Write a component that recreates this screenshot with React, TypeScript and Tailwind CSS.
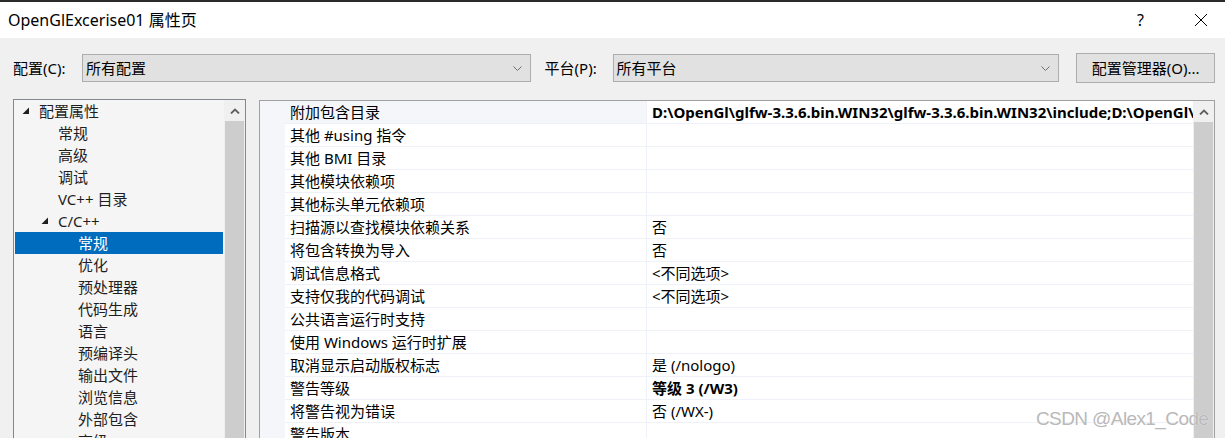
import React from 'react';

// Visual Studio style "property pages" dialog

interface TreeItem {
  label: string;
  level: number;
  expanded?: boolean;
  selected?: boolean;
}

interface PropRow {
  name: string;
  value?: string;
  bold?: boolean;
}

const treeItems: TreeItem[] = [
  { label: '配置属性', level: 0, expanded: true },
  { label: '常规', level: 1 },
  { label: '高级', level: 1 },
  { label: '调试', level: 1 },
  { label: 'VC++ 目录', level: 1 },
  { label: 'C/C++', level: 1, expanded: true },
  { label: '常规', level: 2, selected: true },
  { label: '优化', level: 2 },
  { label: '预处理器', level: 2 },
  { label: '代码生成', level: 2 },
  { label: '语言', level: 2 },
  { label: '预编译头', level: 2 },
  { label: '输出文件', level: 2 },
  { label: '浏览信息', level: 2 },
  { label: '外部包含', level: 2 },
  { label: '高级', level: 2 },
];

const propRows: PropRow[] = [
  {
    name: '附加包含目录',
    value: 'D:\\OpenGl\\glfw-3.3.6.bin.WIN32\\glfw-3.3.6.bin.WIN32\\include;D:\\OpenGl\\glad\\include;%(AdditionalIncludeDirectories)',
    bold: true,
  },
  { name: '其他 #using 指令' },
  { name: '其他 BMI 目录' },
  { name: '其他模块依赖项' },
  { name: '其他标头单元依赖项' },
  { name: '扫描源以查找模块依赖关系', value: '否' },
  { name: '将包含转换为导入', value: '否' },
  { name: '调试信息格式', value: '<不同选项>' },
  { name: '支持仅我的代码调试', value: '<不同选项>' },
  { name: '公共语言运行时支持' },
  { name: '使用 Windows 运行时扩展' },
  { name: '取消显示启动版权标志', value: '是 (/nologo)' },
  { name: '警告等级', value: '等级 3 (/W3)', bold: true },
  { name: '将警告视为错误', value: '否 (/WX-)' },
  { name: '警告版本' },
];

const uiFont = "font-['Segoe_UI','Noto_Sans','Noto_Sans_CJK_SC',sans-serif]";

const ChevronDown = () => (
  <svg width="9" height="5" viewBox="0 0 9 5" className="shrink-0">
    <path d="M0.5 0.5 L4.5 4.5 L8.5 0.5" fill="none" stroke="#6d6d6d" strokeWidth="1" />
  </svg>
);

const ChevronUp = () => (
  <svg width="10" height="6" viewBox="0 0 10 6">
    <path d="M1 5.5 L5 1.5 L9 5.5" fill="none" stroke="#606060" strokeWidth="1.8" />
  </svg>
);

const Expander = () => (
  <svg width="8" height="8" viewBox="0 0 8 8" className="shrink-0">
    <polygon points="7,0.5 7,7 0.5,7" fill="#1e1e1e" />
  </svg>
);

const ComboBox = ({ text, className }: { text: string; className: string }) => (
  <div
    className={`h-[28px] flex items-center justify-between border border-[#adadad] bg-[#e1e1e1] pl-[3px] pr-[8px] ${className}`}
  >
    <span className="text-[15px] leading-none text-black">{text}</span>
    <ChevronDown />
  </div>
);

const ScrollBar = () => (
  <div className="w-[21px] shrink-0 flex flex-col bg-[#f0f0f0]">
    <div className="h-[21px] flex items-center justify-center">
      <ChevronUp />
    </div>
    <div className="flex-1 mx-[1px] bg-[#cdcdcd]" />
  </div>
);

export default function App() {
  return (
    <div className={`relative w-[1225px] h-[438px] overflow-hidden flex flex-col bg-[#f0f0f0] ${uiFont}`}>
      {/* Title bar */}
      <div className="h-[2px] bg-[#2b2b2b]" />
      <div className="h-[36px] shrink-0 bg-white flex items-center justify-between pl-[8px] pr-[17px]">
        <span className="text-[16px] leading-none text-black">OpenGlExcerise01 属性页</span>
        <div className="flex items-center gap-[50px]">
          <span className="text-[16px] leading-none text-black">?</span>
          <svg width="14" height="14" viewBox="0 0 14 14">
            <path d="M1 1 L13 13 M13 1 L1 13" stroke="#000" strokeWidth="1" />
          </svg>
        </div>
      </div>

      {/* Configuration row */}
      <div className="flex items-center pl-[13px] pr-[10px] pt-[15px] text-black">
        <span className="w-[69px] text-[15px] leading-none">配置(C):</span>
        <ComboBox text="所有配置" className="w-[449px]" />
        <span className="ml-[14px] w-[68px] text-[15px] leading-none">平台(P):</span>
        <ComboBox text="所有平台" className="w-[447px]" />
        <button className="ml-[17px] h-[30px] w-[139px] border border-[#adadad] bg-[#e1e1e1] text-[15px] leading-none text-black">
          配置管理器(O)...
        </button>
      </div>

      {/* Panels */}
      <div className="flex flex-1 min-h-0 pl-[13px] pr-[10px] pt-[16px] gap-[13px]">
        {/* Tree */}
        <div className="w-[233px] shrink-0 border border-[#828790] border-b-0 bg-[#f5f5f5] flex overflow-hidden">
          <div className="flex-1 min-w-0 pl-[1px] pr-[1px]">
            {treeItems.map((item, i) => (
              <div
                key={i}
                className={`h-[22px] flex items-center text-[15px] leading-none ${
                  item.selected ? 'bg-[#006cbe] text-white' : 'text-[#1e1e1e]'
                }`}
              >
                <div
                  className={`flex items-center shrink-0 ${
                    item.level === 0 ? 'w-[24px] pl-[7px]' : item.level === 1 ? 'w-[43px] pl-[26px]' : 'w-[63px]'
                  }`}
                >
                  {item.expanded && <Expander />}
                </div>
                <span className="whitespace-nowrap">{item.label}</span>
              </div>
            ))}
          </div>
          <ScrollBar />
        </div>

        {/* Property grid */}
        <div className="mt-[1px] flex-1 min-w-0 border border-[#a0a0a0] border-b-0 bg-white flex overflow-hidden">
          <div className="w-[25px] shrink-0 bg-[#f4f6fa]" />
          <div className="flex-1 min-w-0">
            {propRows.map((row, i) => (
              <div key={i} className="h-[23px] flex border-b border-[#eef2f8] text-[15px] leading-none text-black">
                <div
                  className={`w-[361px] shrink-0 flex items-center pl-[5px] whitespace-nowrap ${
                    i === 0 ? 'bg-[#f4f6fa]' : ''
                  }`}
                >
                  {row.name}
                </div>
                <div
                  className={`flex-1 min-w-0 flex items-center pl-[5px] border-l border-[#eef2f8] whitespace-nowrap overflow-hidden ${
                    row.bold ? 'font-bold' : ''
                  }`}
                >
                  {row.value}
                </div>
              </div>
            ))}
          </div>
          <ScrollBar />
        </div>
      </div>

      {/* Watermark */}
      <div className="absolute left-[1036px] top-[409px] text-[19px] leading-none tracking-[-0.6px] text-[#b9b9b9] font-['Liberation_Sans',sans-serif] [text-shadow:0_0_1px_#ffffff]">
        CSDN @Alex1_Code
      </div>
    </div>
  );
}
